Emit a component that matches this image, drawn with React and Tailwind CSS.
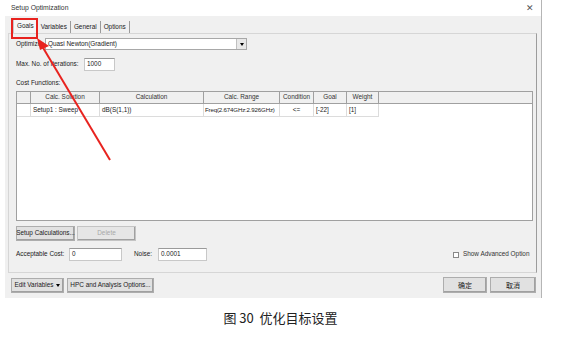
import React from 'react';

const cols = [
  { w: 'w-[14px]', head: '', cell: '' },
  { w: 'w-[69px]', head: 'Calc. Solution', cell: 'Setup1 : Sweep' },
  { w: 'w-[104px]', head: 'Calculation', cell: 'dB(S(1,1))' },
  { w: 'w-[76px]', head: 'Calc. Range', cell: 'Freq(2.674GHz:2.926GHz)', tight: true },
  { w: 'w-[34px]', head: 'Condition', cell: '<=', center: true },
  { w: 'w-[33px]', head: 'Goal', cell: '[-22]' },
  { w: 'w-[32px]', head: 'Weight', cell: '[1]' },
];

const Btn = ({ className = '', children }) => (
  <div
    className={`h-[15px] flex items-center justify-center whitespace-nowrap border border-[#adadad] bg-[#e1e1e1] shadow-[inset_-1px_-1px_0_#a0a0a0] ${className}`}
  >
    {children}
  </div>
);

const Field = ({ className = '', children }) => (
  <div className={`h-[13px] bg-white border border-[#c8c8c8] border-t-[#9a9a9a] flex items-center px-[2px] ${className}`}>
    {children}
  </div>
);

export default function App() {
  return (
    <div className="w-[571px] h-[337px] bg-white relative overflow-hidden font-['Liberation_Sans',sans-serif] text-[6.4px] text-[#1a1a1a] leading-none whitespace-nowrap">
      {/* Dialog window */}
      <div className="ml-[5px] w-[537px] h-[298px] border-r border-[#b5b5b5] flex flex-col">
        {/* Title bar */}
        <div className="h-[16px] bg-white flex items-center justify-between pl-[6px] pr-[7px]">
          <span className="text-[6.8px] text-[#333]">Setup Optimization</span>
          <span className="text-[9px] text-[#555]">✕</span>
        </div>

        <div className="flex-1 bg-[#f0f0f0] flex flex-col pl-[3px] pr-[4px]">
          {/* Tabs */}
          <div className="h-[17px] flex items-end pl-[5px]">
            <div className="h-[14px] px-[3px] flex items-center bg-[#f7f7f7] border border-b-0 border-[#c9c9c9]">Goals</div>
            <div className="h-[12px] px-[3px] flex items-center border-r border-[#9a9a9a]">Variables</div>
            <div className="h-[12px] px-[3px] flex items-center border-r border-[#9a9a9a]">General</div>
            <div className="h-[12px] px-[3px] flex items-center border-r border-[#9a9a9a]">Options</div>
          </div>

          {/* Tab panel */}
          <div className="h-[240px] border border-[#d6d6d6] border-r-[#9c9c9c] flex flex-col pl-[7px] pr-[4px]">
            <div className="mt-[4px] flex items-center h-[12px]">
              <span className="w-[29px]">Optimizer</span>
              <div className="w-[202px] h-[12px] bg-white border border-[#a8a8a8] flex items-center justify-between pl-[2px]">
                <span>Quasi Newton(Gradient)</span>
                <div className="w-[10px] h-[10px] border-l border-[#c0c0c0] bg-[#e8e8e8] flex items-center justify-center">
                  <div className="w-0 h-0 border-l-[2px] border-r-[2px] border-t-[3px] border-l-transparent border-r-transparent border-t-black" />
                </div>
              </div>
            </div>

            <div className="mt-[8px] flex items-center h-[13px]">
              <span className="w-[68px]">Max. No. of Iterations:</span>
              <Field className="w-[31px]">1000</Field>
            </div>

            <div className="mt-[8px] h-[9px] flex items-center">Cost Functions:</div>

            {/* Table */}
            <div className="mt-[3px] w-[517px] h-[130px] bg-white border border-[#a0a0a0] flex flex-col">
              <div className="h-[12px] flex bg-[#f0f0f0] border-b border-[#a0a0a0]">
                {cols.map((c, i) => (
                  <div key={i} className={`${c.w} h-full flex items-center justify-center border-r border-[#a0a0a0] text-[#333]`}>
                    {c.head}
                  </div>
                ))}
                <div className="flex-1" />
              </div>
              <div className="h-[13px] flex">
                {cols.map((c, i) => (
                  <div
                    key={i}
                    className={`${c.w} h-full flex items-center border-r border-b border-[#dcdcdc] overflow-hidden ${c.center ? 'justify-center' : ''} ${c.tight ? 'px-[1px] text-[6.1px] tracking-[-0.15px]' : 'px-[2px]'}`}
                  >
                    {c.cell}
                  </div>
                ))}
              </div>
            </div>

            <div className="mt-[5px] flex gap-[2px]">
              <Btn className="w-[59px]">Setup Calculations...</Btn>
              <Btn className="w-[59px] text-[#a8a8a8] bg-[#e6e6e6] border-[#c4c4c4]">Delete</Btn>
            </div>

            <div className="mt-[7px] flex items-center h-[13px]">
              <span className="w-[53px]">Acceptable Cost:</span>
              <Field className="w-[53px]">0</Field>
              <span className="ml-[12px] w-[24px]">Noise:</span>
              <Field className="w-[49px]">0.0001</Field>
              <div className="ml-auto flex items-center gap-[4px] text-[#333] w-[79px]">
                <div className="w-[6px] h-[6px] border border-[#888] bg-white shrink-0" />
                <span>Show Advanced Option</span>
              </div>
            </div>
          </div>

          {/* Bottom buttons */}
          <div className="mt-[4px] flex items-center pl-[3px] pr-[1px]">
            <Btn className="w-[53px] gap-[3px]">
              Edit Variables
              <div className="w-0 h-0 border-l-[2px] border-r-[2px] border-t-[3px] border-l-transparent border-r-transparent border-t-black" />
            </Btn>
            <Btn className="ml-[3px] w-[87px]">HPC and Analysis Options...</Btn>
            <Btn className="ml-auto w-[44px] h-[16px] font-['Noto_Sans_CJK_SC',sans-serif] text-[7px]">确定</Btn>
            <Btn className="ml-[3px] w-[46px] h-[16px] font-['Noto_Sans_CJK_SC',sans-serif] text-[7px]">取消</Btn>
          </div>
        </div>
      </div>

      {/* Caption */}
      <div className="mt-[13px] flex justify-center pr-[10px] font-['Noto_Sans_CJK_SC',sans-serif] text-[13px] text-[#222]">
        图 30&nbsp;&nbsp;优化目标设置
      </div>

      {/* Annotation: red box and arrow */}
      <div className="absolute left-[11px] top-[18px] w-[27px] h-[21px] border-2 border-[#e8231f]" />
      <svg className="absolute left-0 top-0" width="571" height="337" viewBox="0 0 571 337">
        <line x1="110" y1="160" x2="42" y2="46" stroke="#e8231f" strokeWidth="2" />
        <polygon points="37,38 49,46 40,50" fill="#e8231f" />
      </svg>
    </div>
  );
}
